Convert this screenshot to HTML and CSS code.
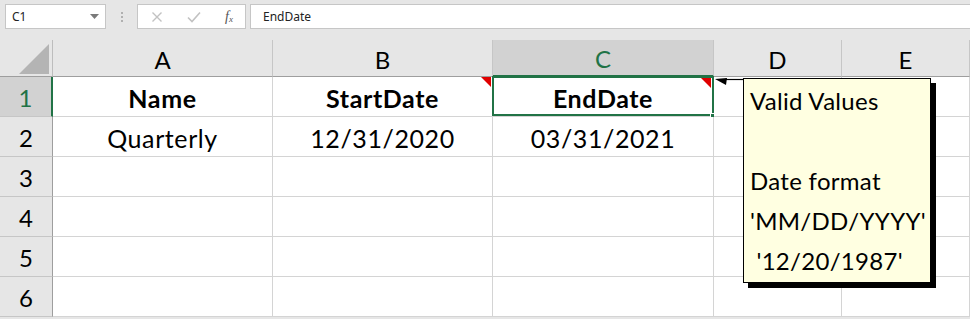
FILE: index.html
```html
<!DOCTYPE html>
<html>
<head>
    <meta charset="UTF-8">
    <meta name="viewport" content="width=device-width, initial-scale=1.0">
    <title>Sheet1</title>
    <link rel="stylesheet" href="styles.css">
</head>
<body>
    <div class="formulaBar">
        <div class="nameBox">
            <span>C1</span>
            <svg width="9" height="5" viewBox="0 0 9 5"><path d="M0 0H9L4.5 5Z" fill="#7a7a7a"/></svg>
        </div>
        <div class="grip">
            <i></i><i></i><i></i>
        </div>
        <div class="fxBox">
            <svg width="12" height="12" viewBox="0 0 12 12"><path d="M1.5 1.5L10.5 10.5M10.5 1.5L1.5 10.5" stroke="#c2c2c2" stroke-width="1.4"/></svg>
            <svg width="14" height="12" viewBox="0 0 14 12"><path d="M1 6.5L5 10.5L13 1.5" stroke="#c2c2c2" stroke-width="1.6" fill="none"/></svg>
            <span class="fx"><i>f</i><sub>x</sub></span>
        </div>
        <div class="formulaInput">EndDate</div>
    </div>

    <div class="sheet">
        <div class="corner"><div class="cornerTri"></div></div>
        <div class="colHead">A</div>
        <div class="colHead">B</div>
        <div class="colHead selected">C</div>
        <div class="colHead">D</div>
        <div class="colHead">E</div>

        <div class="rowHead selected">1</div>
        <div class="cell bold">Name</div>
        <div class="cell bold note">StartDate</div>
        <div class="cell bold note active">EndDate<span class="handle"></span></div>
        <div class="cell"></div>
        <div class="cell"></div>

        <div class="rowHead">2</div>
        <div class="cell">Quarterly</div>
        <div class="cell">12/31/2020</div>
        <div class="cell">03/31/2021</div>
        <div class="cell"></div>
        <div class="cell"></div>

        <div class="rowHead">3</div>
        <div class="cell"></div><div class="cell"></div><div class="cell"></div><div class="cell"></div><div class="cell"></div>
        <div class="rowHead">4</div>
        <div class="cell"></div><div class="cell"></div><div class="cell"></div><div class="cell"></div><div class="cell"></div>
        <div class="rowHead">5</div>
        <div class="cell"></div><div class="cell"></div><div class="cell"></div><div class="cell"></div><div class="cell"></div>
        <div class="rowHead">6</div>
        <div class="cell"></div><div class="cell"></div><div class="cell"></div><div class="cell"></div><div class="cell"></div>

        <svg class="arrow" width="30" height="8" viewBox="0 0 30 8">
            <path d="M0 1L12 0L11 7Z" fill="#000"/>
            <path d="M10 1.5H30" stroke="#000" stroke-width="1.2"/>
        </svg>
        <div class="comment">Valid Values

Date format
'MM/DD/YYYY'
 '12/20/1987'</div>
    </div>
</body>
</html>
```

FILE: styles.css
```css
body {
    margin: 0;
    background-color: #e6e6e6;
    font-family: "Noto Sans", "DejaVu Sans", sans-serif;
    overflow: hidden;
}

/* formula bar */

.formulaBar {
    display: flex;
    align-items: center;
    height: 33px;
    padding: 0 0 0 5px;
    box-sizing: border-box;
}

.nameBox {
    width: 101px;
    height: 25px;
    box-sizing: border-box;
    background: #fff;
    border: 1px solid #c6c6c6;
    display: flex;
    align-items: center;
    justify-content: space-between;
    padding: 0 6px 0 6px;
    font-size: 12px;
    color: #222;
}

.grip {
    width: 31px;
    display: flex;
    flex-direction: column;
    align-items: center;
    gap: 2px;
}

.grip i {
    width: 2px;
    height: 2px;
    background: #b0b0b0;
}

.fxBox {
    width: 109px;
    height: 25px;
    box-sizing: border-box;
    background: #fff;
    border: 1px solid #c6c6c6;
    display: flex;
    align-items: center;
    justify-content: space-between;
    padding: 0 12px 0 13px;
}

.fx {
    font-family: "Liberation Serif", serif;
    font-size: 14px;
    color: #555;
    line-height: 1;
}

.fx sub {
    font-size: 9px;
    font-style: italic;
    vertical-align: -1px;
}

.formulaInput {
    flex: 1;
    margin-left: 4px;
    height: 25px;
    box-sizing: border-box;
    background: #fff;
    border: 1px solid #c6c6c6;
    border-right: none;
    font-size: 12px;
    color: #222;
    padding-left: 12px;
    line-height: 23px;
}

/* grid */

.sheet {
    position: relative;
    margin-top: 7px;
    display: grid;
    grid-template-columns: 53px 220px 220px 221px 128px 1fr;
    grid-template-rows: 37px repeat(6, 40px);
    font-family: Lato, "Noto Sans", sans-serif;
    font-size: 24px;
    color: #000;
}

.corner {
    border-right: 1px solid #bdbdbd;
    border-bottom: 1px solid #9e9e9e;
    position: relative;
}

.cornerTri {
    position: absolute;
    right: 3px;
    bottom: 2px;
    width: 0;
    height: 0;
    border-style: solid;
    border-width: 0 0 30px 30px;
    border-color: transparent transparent #b4b4b4 transparent;
}

.colHead {
    background: #e6e6e6;
    border-right: 1px solid #c6c6c6;
    border-bottom: 1px solid #9e9e9e;
    display: flex;
    align-items: center;
    justify-content: center;
    padding-top: 2px;
}

.rowHead {
    background: #e6e6e6;
    border-right: 1px solid #9e9e9e;
    border-bottom: 1px solid #c6c6c6;
    display: flex;
    align-items: center;
    justify-content: center;
    padding-top: 2px;
}

.colHead.selected,
.rowHead.selected {
    background: #d2d2d2;
    color: #217346;
}

.colHead.selected {
    border-bottom: 2px solid #217346;
}

.rowHead.selected {
    border-right: 2px solid #217346;
}

.cell {
    background: #fff;
    border-right: 1px solid #d4d4d4;
    border-bottom: 1px solid #d4d4d4;
    display: flex;
    align-items: center;
    justify-content: center;
    position: relative;
    padding-top: 3px;
    font-size: 25px;
    letter-spacing: 0.6px;
}

.cell.bold {
    font-weight: bold;
}

.cell.note::after {
    content: "";
    position: absolute;
    top: 0;
    right: 1px;
    border-style: solid;
    border-width: 0 10px 10px 0;
    border-color: transparent #e00000 transparent transparent;
}

.cell.active {
    box-shadow: inset 0 0 0 2px #217346;
    border-right: none;
    margin-left: -1px;
    margin-top: -1px;
}

.cell.active::after {
    right: 3px;
    top: 2px;
}

.handle {
    position: absolute;
    right: -3px;
    bottom: -4px;
    width: 5px;
    height: 5px;
    background: #217346;
    border: 1px solid #fff;
}

/* comment */

.arrow {
    position: absolute;
    left: 715px;
    top: 38px;
}

.comment {
    position: absolute;
    left: 743px;
    top: 38px;
    width: 188px;
    height: 205px;
    box-sizing: border-box;
    background: #ffffe1;
    border: 1px solid #000;
    box-shadow: 5px 5px 0 #000;
    white-space: pre;
    font-family: Lato, "Noto Sans", sans-serif;
    font-size: 24px;
    letter-spacing: 0.3px;
    line-height: 40px;
    padding: 2px 0 0 6px;
    color: #000;
}
```
